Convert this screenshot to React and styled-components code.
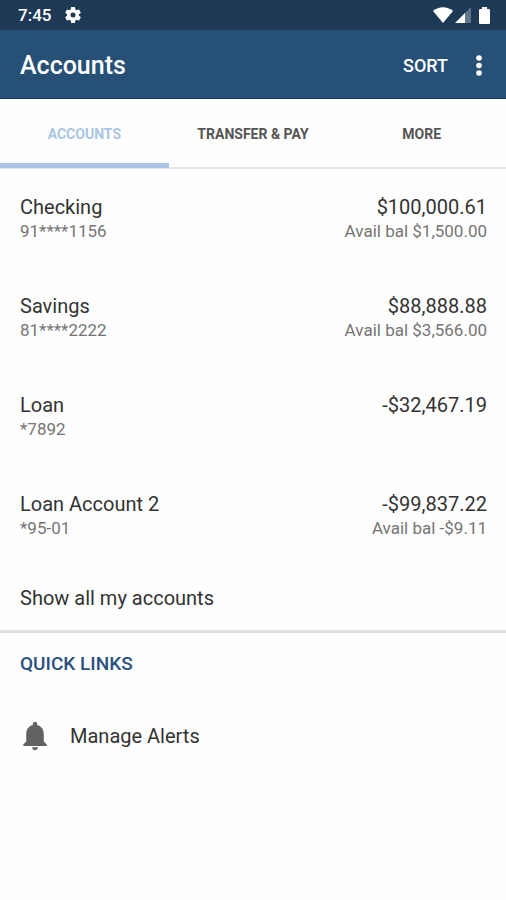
import React from 'react';
import styled, { createGlobalStyle } from 'styled-components';

const GlobalStyle = createGlobalStyle`
    * {
        box-sizing: border-box;
    }
    body {
        margin: 0;
        background: #fefefe;
        color: #333;
        font-family: Roboto, sans-serif;
    }
    button {
        border: 0;
        padding: 0;
        background: none;
        color: inherit;
        font: inherit;
        cursor: pointer;
    }
    svg {
        display: block;
    }
`;

const StatusBar = styled.div`
    display: flex;
    align-items: center;
    justify-content: space-between;
    height: 30px;
    padding: 0 16px 0 18px;
    background: #1d3956;
    color: #fff;
    font-size: 17px;
    font-weight: 500;
`;

const StatusGroup = styled.div`
    display: flex;
    align-items: center;
    gap: ${props => props.$gap};
`;

const AppBar = styled.header`
    display: flex;
    align-items: center;
    height: 69px;
    padding: 2px 24px 0 20px;
    border-bottom: 1px solid #0f3563;
    background: #265075;
    color: #fff;
`;

const Title = styled.h1`
    flex: 1;
    margin: 0;
    font-size: 25px;
    font-weight: 500;
`;

const SortButton = styled.button`
    font-size: 18px;
    font-weight: 500;
`;

const MenuButton = styled.button`
    display: flex;
    margin-left: 28px;
`;

const Tabs = styled.nav`
    display: flex;
    height: 70px;
    border-bottom: 2px solid #e6e6e6;
`;

const Tab = styled.button`
    flex: 1;
    height: 69px;
    padding-top: 5px;
    border-bottom: 5px solid ${props => props.$active ? '#a8c4e2' : 'transparent'};
    color: ${props => props.$active ? '#a9c6e2' : '#555'};
    font-size: 14px;
    font-weight: 700;
`;

const AccountList = styled.ul`
    margin: 0;
    padding: 0;
    list-style: none;
`;

const AccountRow = styled.li`
    display: flex;
    justify-content: space-between;
    height: 99px;
    padding: 25px 19px 0 20px;
`;

const AccountColumn = styled.div`
    text-align: ${props => props.$align || 'left'};
`;

const Main = styled.div`
    font-size: 20px;
    line-height: 26px;
`;

const Sub = styled.div`
    color: #757575;
    font-size: 17px;
    line-height: 23px;
`;

const ShowAllButton = styled.button`
    display: block;
    width: 100%;
    height: 68px;
    padding: 0 20px;
    border-bottom: 3px solid #dedede;
    font-size: 20px;
    text-align: left;
`;

const QuickLinks = styled.section`
    padding: 18px 20px;
`;

const SectionTitle = styled.h2`
    margin: 0;
    color: #2a5080;
    font-size: 19px;
    font-weight: 500;
    line-height: 26px;
`;

const QuickLink = styled.button`
    display: flex;
    align-items: center;
    gap: 20px;
    width: 100%;
    height: 60px;
    margin-top: 29px;
    font-size: 20px;
`;

const accounts = [
    { name: 'Checking', number: '91****1156', balance: '$100,000.61', avail: '$1,500.00' },
    { name: 'Savings', number: '81****2222', balance: '$88,888.88', avail: '$3,566.00' },
    { name: 'Loan', number: '*7892', balance: '-$32,467.19' },
    { name: 'Loan Account 2', number: '*95-01', balance: '-$99,837.22', avail: '-$9.11' },
];

const tabs = ['ACCOUNTS', 'TRANSFER & PAY', 'MORE'];

const GearIcon = () => (
    <svg width='20' height='20' viewBox='0 0 24 24' fill='#fff'>
        <path d='M19.14 12.94c.04-.3.06-.61.06-.94s-.02-.64-.07-.94l2.03-1.58a.49.49 0 0 0 .12-.61l-1.92-3.32a.49.49 0 0 0-.59-.22l-2.39.96a7 7 0 0 0-1.62-.94l-.36-2.54a.48.48 0 0 0-.48-.41h-3.84a.47.47 0 0 0-.47.41l-.36 2.54c-.59.24-1.13.57-1.62.94l-2.39-.96a.48.48 0 0 0-.59.22L2.74 8.87a.47.47 0 0 0 .12.61l2.03 1.58c-.05.3-.09.63-.09.94s.02.64.07.94l-2.03 1.58a.49.49 0 0 0-.12.61l1.92 3.32c.12.22.37.29.59.22l2.39-.96c.5.38 1.03.7 1.62.94l.36 2.54c.05.24.24.41.48.41h3.84c.24 0 .44-.17.47-.41l.36-2.54c.59-.24 1.13-.56 1.62-.94l2.39.96c.22.08.47 0 .59-.22l1.92-3.32a.47.47 0 0 0-.12-.61zM12 15a3 3 0 1 1 0-6 3 3 0 0 1 0 6z' />
    </svg>
);

const WifiIcon = () => (
    <svg width='20' height='16' viewBox='0 0 20 16' fill='#fff'>
        <path d='M0 4C6-1 14-1 20 4L10 16z' />
    </svg>
);

const SignalIcon = () => (
    <svg width='16' height='16' viewBox='0 0 16 16' fill='#fff'>
        <path d='M16 0v16H9V7z' opacity='0.3' />
        <path d='M10 6v10H0z' />
    </svg>
);

const BatteryIcon = () => (
    <svg width='11' height='17' viewBox='0 0 11 17' fill='#fff'>
        <path d='M3 0h5v2h2q1 0 1 1v13q0 1-1 1H1q-1 0-1-1V3q0-1 1-1h2z' />
    </svg>
);

const DotsIcon = () => (
    <svg width='6' height='21' viewBox='0 0 6 21' fill='#fff'>
        <circle cx='3' cy='3' r='2.8' />
        <circle cx='3' cy='10.5' r='2.8' />
        <circle cx='3' cy='18' r='2.8' />
    </svg>
);

const BellIcon = () => (
    <svg width='30' height='30' viewBox='2 2 20 20.5' fill='#626262'>
        <path d='M12 22c1.1 0 2-.9 2-2h-4c0 1.1.9 2 2 2zm6-6v-5c0-3.07-1.63-5.64-4.5-6.32V4c0-.83-.67-1.5-1.5-1.5s-1.5.67-1.5 1.5v.68C7.64 5.36 6 7.92 6 11v5l-2 2v1h16v-1z' />
    </svg>
);

function App () {
    return (
        <>
            <GlobalStyle />
            <StatusBar>
                <StatusGroup $gap='12px'>
                    <span>7:45</span>
                    <GearIcon />
                </StatusGroup>
                <StatusGroup $gap='8px'>
                    <StatusGroup $gap='2px'>
                        <WifiIcon />
                        <SignalIcon />
                    </StatusGroup>
                    <BatteryIcon />
                </StatusGroup>
            </StatusBar>
            <AppBar>
                <Title>Accounts</Title>
                <SortButton>SORT</SortButton>
                <MenuButton aria-label='More options'><DotsIcon /></MenuButton>
            </AppBar>
            <Tabs>
                {tabs.map((tab, i) => (
                    <Tab key={tab} $active={i === 0}>{tab}</Tab>
                ))}
            </Tabs>
            <main>
                <AccountList>
                    {accounts.map(account => (
                        <AccountRow key={account.name}>
                            <AccountColumn>
                                <Main>{account.name}</Main>
                                <Sub>{account.number}</Sub>
                            </AccountColumn>
                            <AccountColumn $align='right'>
                                <Main>{account.balance}</Main>
                                {account.avail && <Sub>Avail bal {account.avail}</Sub>}
                            </AccountColumn>
                        </AccountRow>
                    ))}
                </AccountList>
                <ShowAllButton>Show all my accounts</ShowAllButton>
                <QuickLinks>
                    <SectionTitle>QUICK LINKS</SectionTitle>
                    <QuickLink>
                        <BellIcon />
                        Manage Alerts
                    </QuickLink>
                </QuickLinks>
            </main>
        </>
    )
}

export default App;
